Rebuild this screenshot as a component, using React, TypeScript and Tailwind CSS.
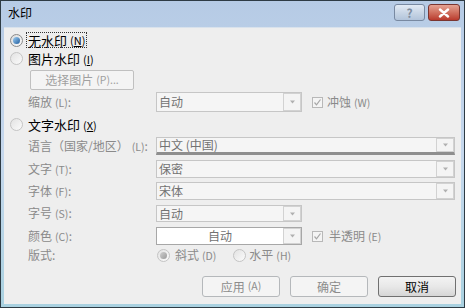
import React from "react";

const FONT = { fontFamily: '"Noto Sans CJK SC", "Noto Sans", sans-serif' };

function Radio({ checked, disabled, light }: { checked?: boolean; disabled?: boolean; light?: boolean }) {
  return (
    <div
      className={
        "w-[13px] h-[13px] rounded-full border flex items-center justify-center shrink-0 " +
        (light || disabled
          ? "border-[#c4c4c4] bg-gradient-to-br from-[#e2e2e2] to-[#fbfbfb]"
          : "border-[#8a8a8a] bg-gradient-to-br from-[#dcdcdc] to-[#fafafa]")
      }
    >
      {checked && (
        <div
          className={
            "w-[7px] h-[7px] rounded-full " +
            (disabled
              ? "bg-gradient-to-br from-[#d0d0d0] to-[#9a9a9a]"
              : "bg-gradient-to-br from-[#9fd0f4] to-[#1f5e9e]")
          }
        />
      )}
    </div>
  );
}

function Check() {
  return (
    <div className="w-[11px] h-[11px] border border-[#b8b8b8] bg-[#f4f4f4] flex items-center justify-center shrink-0">
      <svg width="9" height="9" viewBox="0 0 9 9">
        <path d="M1.5 4.5 L3.5 6.8 L7.5 1.5" fill="none" stroke="#a6a6a6" strokeWidth="1.2" />
      </svg>
    </div>
  );
}

function Arrow() {
  return (
    <div className="w-[18px] h-full border border-[#d2d2d2] bg-[#f4f4f4] flex items-center justify-center shrink-0">
      <svg width="7" height="4" viewBox="0 0 7 4">
        <path d="M1 0.5 L3.5 3.5 L6 0.5 Z" fill="#b0b0b0" />
      </svg>
    </div>
  );
}

function Combo({
  text,
  width,
  white,
  center,
  bottomDark,
  height = "h-[18px]",
}: {
  text: string;
  width: string;
  white?: boolean;
  center?: boolean;
  bottomDark?: boolean;
  height?: string;
}) {
  return (
    <div
      className={
        width +
        " " +
        height +
        " flex items-stretch border " +
        (white ? "bg-white border-[#a7a7a7] " : "bg-[#f5f5f5] border-[#c6c6c6] ") +
        (bottomDark ? "border-b-[3px] border-b-[#8e8e8e]" : "")
      }
    >
      <div
        className={
          "flex-1 flex items-center px-[2px] text-[12px] text-[#727272] leading-none " +
          (center ? "justify-center" : "")
        }
      >
        {text}
      </div>
      <div className="flex items-stretch">
        <Arrow />
      </div>
    </div>
  );
}

function Label({ main, key2, colon = true }: { main: string; key2?: string; colon?: boolean }) {
  return (
    <div className="w-[128px] shrink-0 text-[12px] text-[#8a8a8a] leading-none whitespace-nowrap">
      {main}
      {key2 && <span className="text-[10.5px] ml-[3px]">({key2})</span>}
      {colon && ":"}
    </div>
  );
}

function Btn({ text, disabled, sub }: { text: string; disabled?: boolean; sub?: string }) {
  return (
    <div
      className={
        "w-[78px] h-[21px] rounded-[3px] border flex items-center justify-center text-[12px] leading-none " +
        (disabled
          ? "border-[#b5b8bb] bg-[#f4f4f4] text-[#8c8c8c]"
          : "border-[#707070] bg-gradient-to-b from-[#f3f3f3] via-[#e8e8e8] to-[#d6d6d6] text-black")
      }
    >
      {text}
      {sub && <span className="text-[10.5px] ml-[3px]">({sub})</span>}
    </div>
  );
}

export default function App() {
  return (
    <div className="w-[465px] h-[308px] bg-[#2e3b44] p-[1px]" style={FONT}>
      <div className="w-full h-full bg-gradient-to-b from-[#b6cbe5] via-[#c6d8ed] to-[#a9d1e0] flex flex-col px-[3px] pb-[3px]">
        {/* title bar */}
        <div className="h-[26px] flex items-start shrink-0">
          <div className="pl-[4px] pt-[6px] text-[12px] leading-none text-black">水印</div>
          <div className="flex-1" />
          <div className="flex pt-[3px] gap-[3px] pr-[1px]">
            <div className="w-[31px] h-[17px] rounded-[3px] border border-[#7889a1] bg-gradient-to-b from-[#e3ebf5] via-[#c9d6e6] to-[#b2c4da] flex items-center justify-center text-[12px] font-bold text-[#7d8c9e] leading-none">
              ?
            </div>
            <div className="w-[32px] h-[17px] rounded-[3px] border border-[#7a3530] bg-gradient-to-b from-[#e4a293] via-[#d0705f] to-[#b9392d] flex items-center justify-center">
              <svg width="12" height="10" viewBox="0 0 12 10">
                <path d="M2 1.5 L10 8.5 M10 1.5 L2 8.5" stroke="#ffffff" strokeWidth="2.4" strokeLinecap="round" />
              </svg>
            </div>
          </div>
        </div>
        {/* client */}
        <div className="flex-1 bg-[#eeeeee] border-t border-[#d9e2ec] flex flex-col">
          <div className="h-[3px]" />
          {/* 无水印 */}
          <div className="h-[18px] flex items-center pl-[6px]">
            <Radio checked />
            <div className="ml-[3px] border border-dotted border-[#333] px-[1px] h-[16px] flex items-center text-[13px] leading-none text-black">
              无水印<span className="text-[11px] ml-[3px]">(<span className="underline">N</span>)</span>
            </div>
          </div>
          {/* 图片水印 */}
          <div className="h-[18px] flex items-center pl-[6px]">
            <Radio light />
            <div className="ml-[5px] text-[13px] leading-none text-black">
              图片水印<span className="text-[11px] ml-[3px]">(<span className="underline">I</span>)</span>
            </div>
          </div>
          <div className="h-[3px]" />
          <div className="h-[20px] flex pl-[26px]">
            <div className="w-[104px] h-[20px] border border-[#c0c0c0] rounded-[2px] bg-[#f4f4f4] flex items-center justify-center text-[12px] text-[#a0a0a0] leading-none">
              选择图片<span className="text-[10.5px] ml-[3px]">(P)...</span>
            </div>
          </div>
          <div className="h-[2px]" />
          {/* 缩放 */}
          <div className="h-[20px] flex items-center pl-[24px]">
            <Label main="缩放" key2="L" />
            <Combo text="自动" width="w-[146px]" height="h-[20px]" />
            <div className="ml-[10px]">
              <Check />
            </div>
            <div className="ml-[4px] text-[12px] text-[#8a8a8a] leading-none">
              冲蚀<span className="text-[10.5px] ml-[3px]">(W)</span>
            </div>
          </div>
          <div className="h-[3px]" />
          {/* 文字水印 */}
          <div className="h-[18px] flex items-center pl-[6px]">
            <Radio light />
            <div className="ml-[5px] text-[13px] leading-none text-black">
              文字水印<span className="text-[11px] ml-[3px]">(<span className="underline">X</span>)</span>
            </div>
          </div>
          <div className="h-[4px]" />
          <div className="h-[18px] flex items-center pl-[24px]">
            <Label main="语言（国家/地区）" key2="L" />
            <Combo text="中文 (中国)" width="w-[299px]" bottomDark />
          </div>
          <div className="h-[5px]" />
          <div className="h-[18px] flex items-center pl-[24px]">
            <Label main="文字" key2="T" />
            <Combo text="保密" width="w-[299px]" />
          </div>
          <div className="h-[4px]" />
          <div className="h-[18px] flex items-center pl-[24px]">
            <Label main="字体" key2="F" />
            <Combo text="宋体" width="w-[299px]" />
          </div>
          <div className="h-[5px]" />
          <div className="h-[17px] flex items-center pl-[24px]">
            <Label main="字号" key2="S" />
            <Combo text="自动" width="w-[146px]" height="h-[17px]" />
          </div>
          <div className="h-[5px]" />
          <div className="h-[18px] flex items-center pl-[24px]">
            <Label main="颜色" key2="C" />
            <Combo text="自动" width="w-[146px]" white center />
            <div className="ml-[10px]">
              <Check />
            </div>
            <div className="ml-[6px] text-[12px] text-[#8a8a8a] leading-none">
              半透明<span className="text-[10.5px] ml-[3px]">(E)</span>
            </div>
          </div>
          <div className="h-[1px]" />
          <div className="h-[18px] flex items-center pl-[24px]">
            <div className="w-[129px] shrink-0 text-[12px] text-[#8a8a8a] leading-none">版式:</div>
            <Radio checked disabled />
            <div className="ml-[5px] text-[12px] text-[#8a8a8a] leading-none">
              斜式<span className="text-[10.5px] ml-[3px]">(D)</span>
            </div>
            <div className="ml-[17px]">
              <Radio disabled />
            </div>
            <div className="ml-[3px] text-[12px] text-[#8a8a8a] leading-none">
              水平<span className="text-[10.5px] ml-[3px]">(H)</span>
            </div>
          </div>
          <div className="h-[12px]" />
          <div className="flex justify-end gap-[10px] pr-[5px]">
            <Btn text="应用" sub="A" disabled />
            <Btn text="确定" disabled />
            <Btn text="取消" />
          </div>
        </div>
      </div>
    </div>
  );
}
